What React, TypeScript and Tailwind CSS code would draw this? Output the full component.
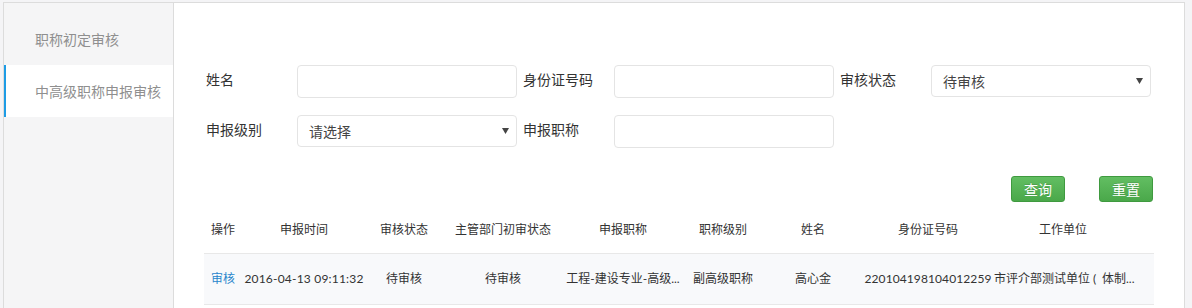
import React from "react"

const cn = "font-['Lato','Noto_Sans_CJK_SC',sans-serif]"

const columns = [
  { title: "操作", w: "w-[38px]" },
  { title: "申报时间", w: "w-[124px]" },
  { title: "审核状态", w: "w-[76px]" },
  { title: "主管部门初审状态", w: "w-[122px]" },
  { title: "申报职称", w: "w-[118px]" },
  { title: "职称级别", w: "w-[82px]" },
  { title: "姓名", w: "w-[98px]" },
  { title: "身份证号码", w: "w-[132px]" },
  { title: "工作单位", w: "w-[138px]" },
  { title: "", w: "w-[22px]" },
]

const rows = [
  {
    time: "2016-04-13 09:11:32",
    status: "待审核",
    deptStatus: "待审核",
    title: "工程-建设专业-高级...",
    level: "副高级职称",
    name: "高心金",
    idNo: "220104198104012259",
    unit: ["市评介部测试单位", "体制..."],
  },
]

function Caret() {
  return (
    <svg width="7" height="6" viewBox="0 0 7 6" className="shrink-0">
      <polygon points="0,0 7,0 3.5,6" fill="#444" />
    </svg>
  )
}

function Field({ label, children }: { label: string; children: React.ReactNode }) {
  return (
    <div className="flex items-start">
      <label className="w-[91px] pt-[5px] text-[14px] leading-[20px] text-[#333]">{label}</label>
      {children}
    </div>
  )
}

function TextInput() {
  return <div className="h-[33px] w-[220px] rounded-[4px] border border-[#e4e4e4] bg-white" />
}

function Select({ value }: { value: string }) {
  return (
    <div className="flex h-[32px] w-[220px] items-center justify-between rounded-[4px] border border-[#e4e4e4] bg-white pl-[11px] pr-[7px]">
      <span className="text-[14px] text-[#444]">{value}</span>
      <Caret />
    </div>
  )
}

function GreenButton({ children }: { children: React.ReactNode }) {
  return (
    <button className="flex h-[26px] w-[54px] items-center justify-center rounded-[3px] border border-[#3f9a3f] bg-gradient-to-b from-[#62be62] to-[#4aa84a] text-[14px] text-white [text-shadow:0_-1px_0_rgba(0,0,0,0.15)]">
      {children}
    </button>
  )
}

export default function App() {
  return (
    <div className={`h-[308px] overflow-hidden bg-[#f4f4f6] pl-[3px] pt-[2px] ${cn}`}>
      <div className="flex h-[400px] w-[1182px] border border-[#dcdcdc] bg-white">
        {/* sidebar */}
        <div className="w-[170px] shrink-0 border-r border-[#dcdcdc] bg-[#f5f5f6] pt-[10px]">
          <div className="flex h-[52px] items-center pl-[31px] text-[14px] text-[#8f8f8f]">职称初定审核</div>
          <div className="flex h-[52px] items-center border-l-2 border-[#1d9ce5] bg-white pl-[29px] text-[14px] text-[#8f8f8f]">
            中高级职称申报审核
          </div>
        </div>

        {/* main */}
        <div className="flex-1 pl-[30px] pr-[30px] pt-[62px]">
          <div className="ml-[2px] flex flex-col gap-[17px]">
            <div className="flex gap-[6px]">
              <Field label="姓名">
                <TextInput />
              </Field>
              <Field label="身份证号码">
                <TextInput />
              </Field>
              <Field label="审核状态">
                <Select value="待审核" />
              </Field>
            </div>
            <div className="flex gap-[6px]">
              <Field label="申报级别">
                <Select value="请选择" />
              </Field>
              <Field label="申报职称">
                <TextInput />
              </Field>
            </div>
          </div>

          <div className="mr-[1px] mt-[28px] flex justify-end gap-[34px]">
            <GreenButton>查询</GreenButton>
            <GreenButton>重置</GreenButton>
          </div>

          <table className="mt-[4px] w-[950px] table-fixed border-collapse text-[12px] text-[#333]">
            <thead>
              <tr className="h-[47px] border-b border-[#e8e8e8]">
                {columns.map((c, i) => (
                  <th key={i} className={`${c.w} whitespace-nowrap p-0 pt-[2px] text-center font-normal`}>
                    {c.title}
                  </th>
                ))}
              </tr>
            </thead>
            <tbody>
              {rows.map((r) => (
                <tr key={r.idNo} className="h-[51px] border-b border-[#e8e8e8] bg-[#f8f9fb]">
                  <td className="whitespace-nowrap p-0 text-center text-[#2a86cc]">审核</td>
                  <td className="whitespace-nowrap p-0 text-center tracking-[0.2px]">{r.time}</td>
                  <td className="whitespace-nowrap p-0 text-center">{r.status}</td>
                  <td className="whitespace-nowrap p-0 text-center">{r.deptStatus}</td>
                  <td className="whitespace-nowrap p-0 text-center">{r.title}</td>
                  <td className="whitespace-nowrap p-0 text-center">{r.level}</td>
                  <td className="whitespace-nowrap p-0 text-center">{r.name}</td>
                  <td className="whitespace-nowrap p-0 text-center tracking-[0.1px]">{r.idNo}</td>
                  <td className="whitespace-nowrap p-0 text-center">
                    {r.unit[0]}
                    <span className="inline-block w-[12px] pl-[3px] text-left">(</span>
                    {r.unit[1]}
                  </td>
                  <td className="p-0" />
                </tr>
              ))}
            </tbody>
          </table>
        </div>
      </div>
    </div>
  )
}
